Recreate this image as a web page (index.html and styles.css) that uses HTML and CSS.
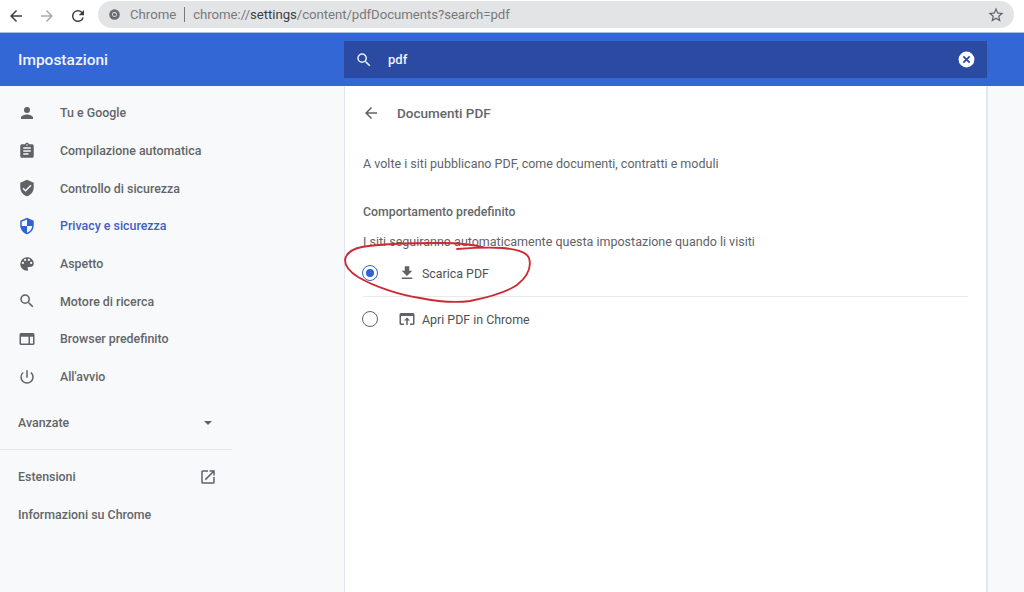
FILE: index.html
```html
<!DOCTYPE html>
<html lang="it">
<head>
<meta charset="utf-8">
<title>Impostazioni</title>
<link rel="stylesheet" href="styles.css">
</head>
<body>
<div class="toolbar">
  <svg class="tb-icon" viewBox="0 0 24 24"><path d="M20 11H7.83l5.59-5.59L12 4l-8 8 8 8 1.41-1.41L7.83 13H20z"/></svg>
  <svg class="tb-icon dim" viewBox="0 0 24 24"><path d="M4 11h12.17l-5.59-5.59L12 4l8 8-8 8-1.41-1.41L16.17 13H4z"/></svg>
  <svg class="tb-icon" viewBox="0 0 24 24"><path d="M17.65 6.35A7.96 7.96 0 0 0 12 4a8 8 0 1 0 7.73 10h-2.08A6 6 0 1 1 12 6c1.66 0 3.14.69 4.22 1.78L13 11h7V4z"/></svg>
  <div class="omnibox">
    <svg class="chrome-icon" viewBox="0 0 16 16"><circle cx="8" cy="8" r="6.5" fill="#6b6d70"/><circle cx="8" cy="8" r="3" fill="#e3e4e6"/><circle cx="8" cy="8" r="2" fill="#6b6d70"/></svg>
    <span class="omni-label">Chrome</span>
    <span class="omni-sep"></span>
    <span class="omni-url">chrome://<b>settings</b>/content/pdfDocuments?search=pdf</span>
    <svg class="star" viewBox="0 0 24 24"><path d="M22 9.24l-7.19-.62L12 2 9.19 8.63 2 9.24l5.46 4.73L5.82 21 12 17.27 18.18 21l-1.63-7.03L22 9.24zM12 15.4l-3.76 2.27 1-4.28-3.32-2.88 4.38-.38L12 6.1l1.71 4.04 4.38.38-3.32 2.88 1 4.28L12 15.4z"/></svg>
  </div>
</div>
<header class="bluebar">
  <div class="brand">Impostazioni</div>
  <div class="searchbox">
    <svg class="search-icon" viewBox="0 0 24 24"><path d="M15.5 14h-.79l-.28-.27A6.47 6.47 0 0 0 16 9.5 6.5 6.5 0 1 0 9.5 16c1.61 0 3.09-.59 4.23-1.57l.27.28v.79l5 4.99L20.49 19l-4.99-5zm-6 0C7.01 14 5 11.99 5 9.5S7.01 5 9.5 5 14 7.01 14 9.5 11.99 14 9.5 14z"/></svg>
    <span class="search-text">pdf</span>
    <svg class="clear-icon" viewBox="0 0 24 24"><circle cx="12" cy="12" r="10" fill="#fff"/><path d="M8 8l8 8M16 8l-8 8" stroke="#2b4ba3" stroke-width="2.2" fill="none"/></svg>
  </div>
</header>
<div class="main">
  <nav class="sidebar">
    <a class="nav-item"><svg class="nav-icon" viewBox="0 0 24 24"><path d="M12 12a4 4 0 1 0 0-8 4 4 0 0 0 0 8zm0 2c-2.67 0-8 1.34-8 4v2h16v-2c0-2.66-5.33-4-8-4z"/></svg>Tu e Google</a>
    <a class="nav-item"><svg class="nav-icon" viewBox="0 0 24 24"><path d="M19 3h-4.18C14.4 1.84 13.3 1 12 1s-2.4.84-2.82 2H5a2 2 0 0 0-2 2v14a2 2 0 0 0 2 2h14a2 2 0 0 0 2-2V5a2 2 0 0 0-2-2zm-7 0a1 1 0 1 1 0 2 1 1 0 0 1 0-2zm2 14H7v-2h7v2zm3-4H7v-2h10v2zm0-4H7V7h10v2z"/></svg>Compilazione automatica</a>
    <a class="nav-item"><svg class="nav-icon" viewBox="0 0 24 24"><path d="M12 1L3 5v6c0 5.55 3.84 10.74 9 12 5.16-1.26 9-6.45 9-12V5l-9-4zm-2 16l-4-4 1.41-1.41L10 14.17l6.59-6.59L18 9l-8 8z"/></svg>Controllo di sicurezza</a>
    <a class="nav-item active"><svg class="nav-icon" viewBox="0 0 24 24"><path d="M12 1L3 5v6c0 5.55 3.84 10.74 9 12 5.16-1.26 9-6.45 9-12V5l-9-4zm0 10.99h7c-.53 4.12-3.28 7.79-7 8.94V12H5V6.3l7-3.11v8.8z"/></svg>Privacy e sicurezza</a>
    <a class="nav-item"><svg class="nav-icon" viewBox="0 0 24 24"><path d="M12 3a9 9 0 0 0 0 18c.83 0 1.5-.67 1.5-1.5 0-.39-.15-.74-.39-1.01-.23-.26-.38-.61-.38-.99 0-.83.67-1.5 1.5-1.5H16a5 5 0 0 0 5-5c0-4.42-4.03-8-9-8zm-5.5 9a1.5 1.5 0 1 1 0-3 1.5 1.5 0 0 1 0 3zm3-4a1.5 1.5 0 1 1 0-3 1.5 1.5 0 0 1 0 3zm5 0a1.5 1.5 0 1 1 0-3 1.5 1.5 0 0 1 0 3zm3 4a1.5 1.5 0 1 1 0-3 1.5 1.5 0 0 1 0 3z"/></svg>Aspetto</a>
    <a class="nav-item"><svg class="nav-icon" viewBox="0 0 24 24"><path d="M15.5 14h-.79l-.28-.27A6.47 6.47 0 0 0 16 9.5 6.5 6.5 0 1 0 9.5 16c1.61 0 3.09-.59 4.23-1.57l.27.28v.79l5 4.99L20.49 19l-4.99-5zm-6 0C7.01 14 5 11.99 5 9.5S7.01 5 9.5 5 14 7.01 14 9.5 11.99 14 9.5 14z"/></svg>Motore di ricerca</a>
    <a class="nav-item"><svg class="nav-icon" viewBox="0 0 24 24"><path d="M20 4H4a2 2 0 0 0-2 2v12a2 2 0 0 0 2 2h16a2 2 0 0 0 2-2V6a2 2 0 0 0-2-2zm-6 14H4V9h10v9zm6 0h-4V9h4v9z"/></svg>Browser predefinito</a>
    <a class="nav-item"><svg class="nav-icon" viewBox="0 0 24 24"><path d="M13 3h-2v10h2V3zm4.83 2.17l-1.42 1.42A6.92 6.92 0 0 1 19 12a7 7 0 1 1-14 0c0-2.19 1.01-4.14 2.58-5.42L6.17 5.17A8.932 8.932 0 0 0 3 12a9 9 0 0 0 18 0c0-2.74-1.23-5.18-3.17-6.83z"/></svg>All'avvio</a>
    <div class="advanced"><span>Avanzate</span><span class="caret"></span></div>
    <div class="side-sep"></div>
    <a class="side-link"><span>Estensioni</span><svg class="ext-icon" viewBox="0 0 24 24"><path d="M19 19H5V5h7V3H5a2 2 0 0 0-2 2v14a2 2 0 0 0 2 2h14a2 2 0 0 0 2-2v-7h-2v7zM14 3v2h3.59l-9.83 9.83 1.41 1.41L19 6.41V10h2V3h-7z"/></svg></a>
    <a class="side-link"><span>Informazioni su Chrome</span></a>
  </nav>
  <main class="card">
    <div class="page-head">
      <svg class="back-icon" viewBox="0 0 24 24"><path d="M20 11H7.83l5.59-5.59L12 4l-8 8 8 8 1.41-1.41L7.83 13H20z"/></svg>
      <h1 class="page-title">Documenti PDF</h1>
    </div>
    <p class="intro">A volte i siti pubblicano PDF, come documenti, contratti e moduli</p>
    <h2 class="sub-title">Comportamento predefinito</h2>
    <p class="sub-desc">I siti seguiranno automaticamente questa impostazione quando li visiti</p>
    <div class="option first">
      <span class="radio on"></span>
      <svg class="opt-icon" viewBox="0 0 24 24"><path d="M19 9h-4V3H9v6H5l7 7 7-7zM5 18v2h14v-2H5z"/></svg>
      <span>Scarica PDF</span>
    </div>
    <div class="option">
      <span class="radio"></span>
      <svg class="opt-icon" viewBox="0 0 24 24"><path d="M20 4H4a2 2 0 0 0-2 2v12a2 2 0 0 0 2 2h4v-2H4V8h16v10h-4v2h4a2 2 0 0 0 2-2V6a2 2 0 0 0-2-2zm-8 6l-4 4h3v6h2v-6h3l-4-4z"/></svg>
      <span>Apri PDF in Chrome</span>
    </div>
  </main>
</div>
<svg class="scribble" viewBox="0 0 1024 592"><path d="M457 249C470 248 490 247 502 248C515 249 526 251 529 258C532 268 527 277 517 285C505 293 485 298 470 301C455 303 435 301 420 298C400 295 375 287 358 277C350 272 345 266 345 260C346 253 352 249 362 247C380 244 410 243 440 243C455 243 472 244 486 248" fill="none" stroke="#cc2a33" stroke-width="1.8" stroke-linecap="round"/></svg>
</body>
</html>
```
FILE: styles.css
```css
* { box-sizing: border-box; }
html, body { margin: 0; height: 592px; overflow: hidden; }
body {
  position: relative;
  background: #fff;
  font-family: Roboto, "Liberation Sans", sans-serif;
  color: #5f6368;
}
.toolbar {
  height: 32px;
  display: flex;
  align-items: center;
  padding: 0 0 0 7px;
  background: #fff;
}
.tb-icon { width: 18px; height: 18px; fill: #3c4043; margin-right: 13px; flex: none; }
.tb-icon.dim { fill: #a9abae; }
.tb-icon:nth-child(3) { margin-right: 11px; }
.omnibox {
  width: 916px;
  height: 27px;
  margin-top: -3px;
  border-radius: 14px;
  background: #e3e4e6;
  display: flex;
  align-items: center;
  padding: 0 9px 0 10px;
  font-size: 13.2px;
  color: #77797d;
}
.chrome-icon { width: 13px; height: 13px; margin-right: 9px; flex: none; }
.omni-sep { width: 1px; height: 15px; background: #77797d; margin: 0 8px 0 8px; }
.omni-url { letter-spacing: -.05px; }
.omni-url b { font-weight: 400; color: #3c4043; }
.star { width: 18px; height: 18px; fill: #5f6368; margin-left: auto; }
.bluebar {
  height: 54px;
  background: #3367d6;
  border-top: 1px solid #a9bde8;
  display: flex;
  align-items: center;
}
.brand { width: 344px; padding-left: 18px; font-size: 15.5px; font-weight: 500; color: #f1f4fc; }
.searchbox {
  width: 643px;
  height: 37px;
  background: #2b4ba3;
  display: flex;
  align-items: center;
  padding: 0 11px 0 11px;
  color: #f1f4fc;
  font-size: 13px;
  font-weight: 500;
}
.search-icon { width: 18px; height: 18px; fill: #e6ecfa; margin-right: 15px; }
.clear-icon { width: 19px; height: 19px; margin-left: auto; }
.main { display: flex; height: 506px; background: #f8f9fa; }
.sidebar { width: 344px; flex: none; padding-top: 8px; }
.nav-item {
  height: 37.7px;
  display: flex;
  align-items: center;
  padding-left: 18px;
  font-size: 12.4px;
  font-weight: 500;
  color: #636669;
}
.nav-item.active { color: #3f61c4; }
.nav-icon { width: 18px; height: 18px; fill: #5f6368; margin-right: 24px; flex: none; }
.active .nav-icon { fill: #2f62d6; }
.advanced {
  width: 232px;
  height: 38px;
  margin-top: 8px;
  display: flex;
  align-items: center;
  justify-content: space-between;
  padding: 0 20px 0 18px;
  font-size: 12.4px;
  font-weight: 500;
  color: #636669;
}
.caret { width: 0; height: 0; border: 4px solid transparent; border-top-color: #5f6368; border-bottom: 0; }
.side-sep { width: 232px; height: 1px; background: #e6e7e9; margin: 7px 0 8px; }
.side-link {
  width: 232px;
  height: 38px;
  display: flex;
  align-items: center;
  justify-content: space-between;
  padding: 0 15px 0 18px;
  font-size: 12.4px;
  font-weight: 500;
  color: #636669;
}
.ext-icon { width: 18px; height: 18px; fill: #5f6368; }
.card {
  width: 644px;
  background: #fff;
  border-left: 1px solid #dfe3ea;
  border-right: 2px solid #dfe6f2;
  padding: 0 18px;
}
.page-head { height: 54px; display: flex; align-items: center; padding-bottom: 1px; }
.back-icon { width: 18px; height: 18px; fill: #5f6368; margin-left: -1px; margin-right: 17px; }
.page-title { margin: 0; font-size: 13.5px; font-weight: 500; color: #63666a; }
.intro { margin: 16px 0 0; font-size: 12.5px; line-height: 16px; }
.sub-title { margin: 32px 0 0; font-size: 12.3px; font-weight: 500; line-height: 16px; color: #63666a; }
.sub-desc { margin: 14px 0 0; font-size: 12.5px; line-height: 16px; }
.option {
  height: 44px;
  display: flex;
  align-items: center;
  font-size: 12.4px;
  color: #4e5256;
}
.option.first { height: 47px; margin-top: 0; border-bottom: 1px solid #e9eaec; }
.radio {
  width: 16px;
  height: 16px;
  margin-left: -1px;
  margin-right: 20px;
  border: 1.5px solid #5f6368;
  border-radius: 50%;
  display: flex;
  align-items: center;
  justify-content: center;
  flex: none;
}
.radio.on { border-color: #2f62d6; }
.radio.on::after { content: ""; width: 8px; height: 8px; background: #2f62d6; border-radius: 50%; }
.opt-icon { width: 18px; height: 18px; fill: #5f6368; margin-right: 6px; flex: none; }
.scribble { position: absolute; left: 0; top: 0; width: 1024px; height: 592px; pointer-events: none; }
```
